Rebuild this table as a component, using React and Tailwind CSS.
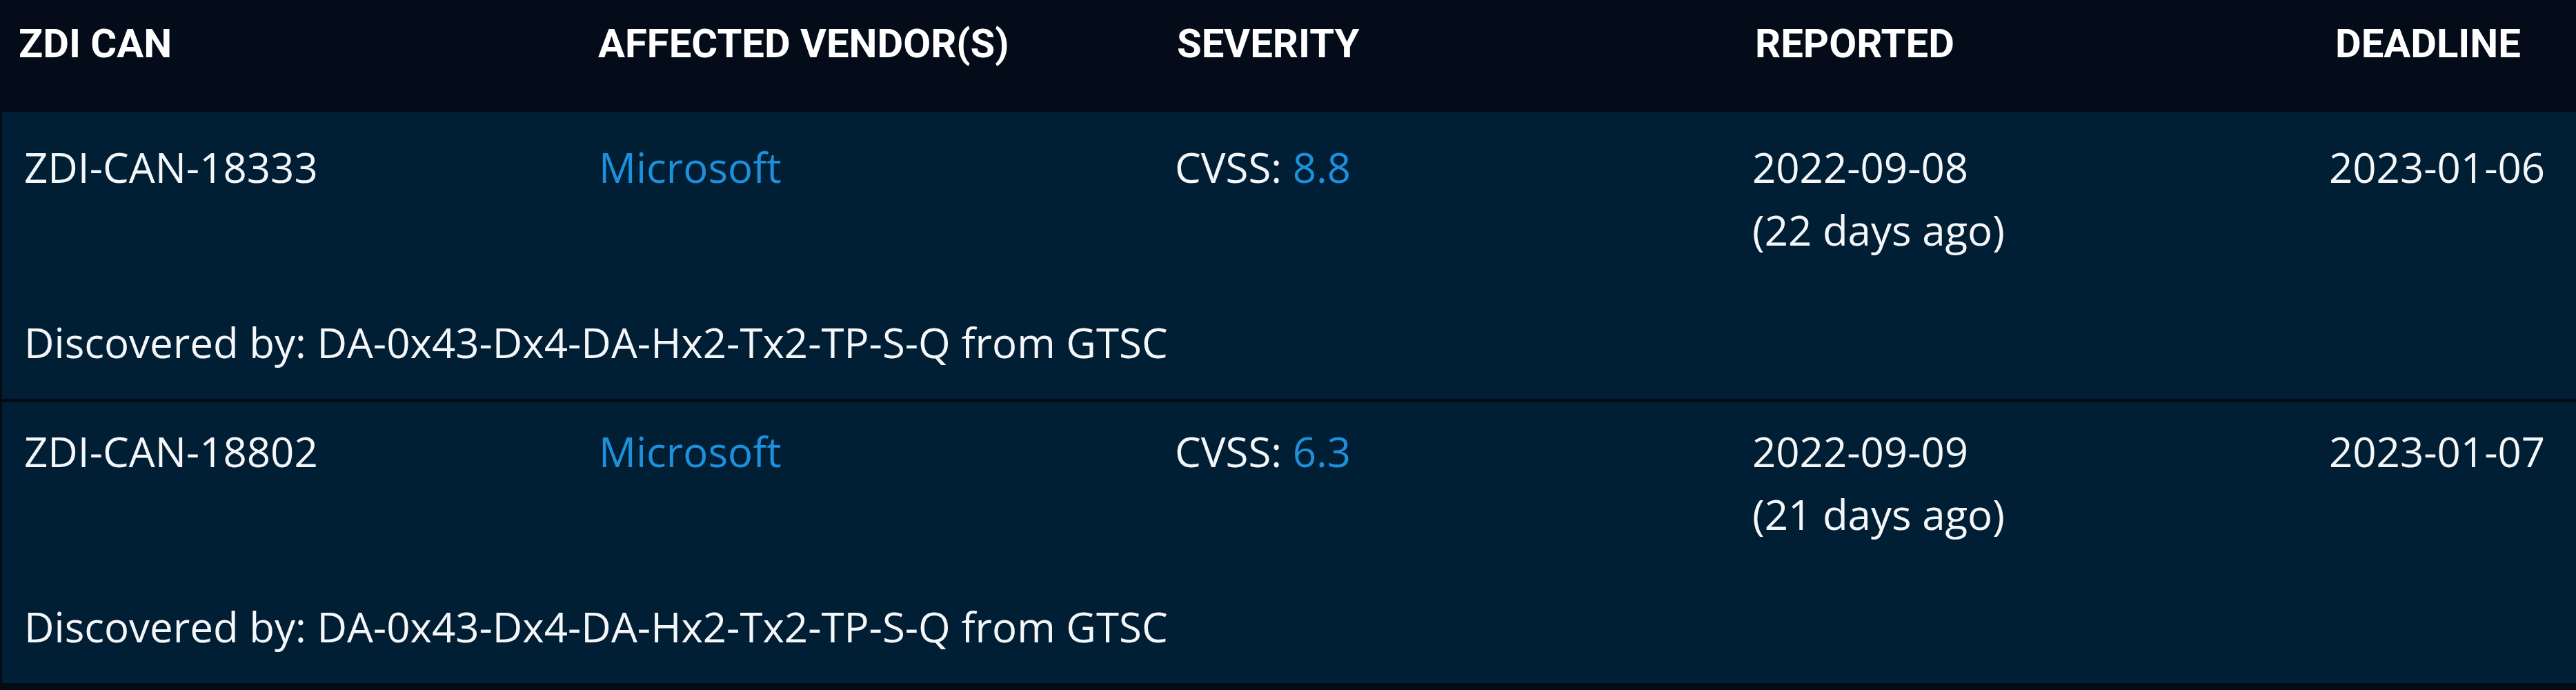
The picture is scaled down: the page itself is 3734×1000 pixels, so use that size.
const rows = [
  {
    id: "ZDI-CAN-18333",
    vendor: "Microsoft",
    cvss: "8.8",
    reported: "2022-09-08",
    ago: "(22 days ago)",
    deadline: "2023-01-06",
    by: "Discovered by: DA-0x43-Dx4-DA-Hx2-Tx2-TP-S-Q from GTSC",
    pad: "pt-[35px]",
  },
  {
    id: "ZDI-CAN-18802",
    vendor: "Microsoft",
    cvss: "6.3",
    reported: "2022-09-09",
    ago: "(21 days ago)",
    deadline: "2023-01-07",
    by: "Discovered by: DA-0x43-Dx4-DA-Hx2-Tx2-TP-S-Q from GTSC",
    pad: "pt-[26px]",
  },
];

const Header = () => (
  <div className="h-[162px] pt-[29px] pl-[24px] bg-[#030c18] font-['Roboto',sans-serif] font-bold text-[58px] leading-[68px] text-white grid grid-cols-[840px_839px_838px_841px_1fr] whitespace-nowrap">
    <div>ZDI CAN</div>
    <div>AFFECTED VENDOR(S)</div>
    <div>SEVERITY</div>
    <div>REPORTED</div>
    <div>DEADLINE</div>
  </div>
);

const Row = ({ row }) => (
  <div className={`bg-[#001e34] pl-[32px] pb-[36px] ${row.pad}`}>
    <div className="grid grid-cols-[833px_835px_837px_836px_1fr] whitespace-nowrap">
      <div>{row.id}</div>
      <div className="text-[#1e8fdb]">{row.vendor}</div>
      <div>
        CVSS: <span className="text-[#1e8fdb]">{row.cvss}</span>
      </div>
      <div>
        <div>{row.reported}</div>
        <div>{row.ago}</div>
      </div>
      <div>{row.deadline}</div>
    </div>
    <div className="mt-[72px] whitespace-nowrap">{row.by}</div>
  </div>
);

export default function App() {
  return (
    <div className="w-[3734px] h-[1000px] overflow-hidden bg-[#020b16]">
      <div className="w-[4300px] border-l-[3px] border-[#020b16] font-['Open_Sans',sans-serif] text-[60px] leading-[91px] text-[#f4f6f8]">
        <Header />
        <div className="flex flex-col gap-[5px]">
          {rows.map((r) => (
            <Row key={r.id} row={r} />
          ))}
        </div>
      </div>
    </div>
  );
}
